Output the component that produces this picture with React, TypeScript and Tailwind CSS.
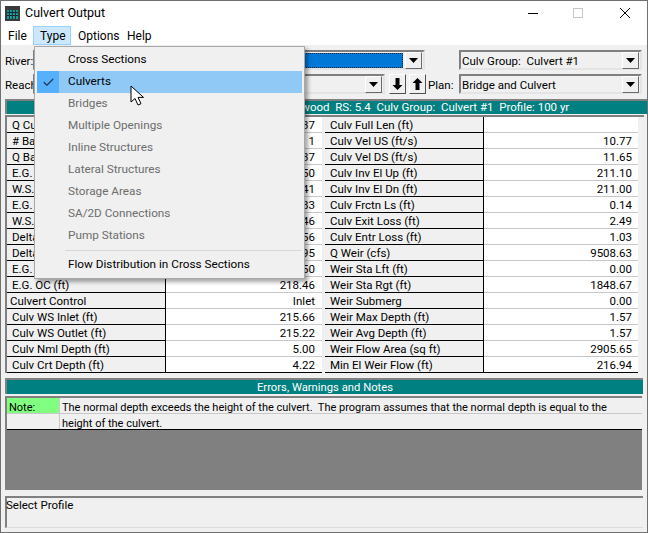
import { Check } from 'lucide-react';

const FONT = "font-['Roboto','Liberation_Sans',sans-serif]";

const leftRows = [
  ['Q Culv Group (cfs)', '37'],
  ['# Barrels', '1'],
  ['Q Barrel (cfs)', '37'],
  ['E.G. US. (ft)', '50'],
  ['W.S. US. (ft)', '41'],
  ['E.G. DS (ft)', '83'],
  ['W.S. DS (ft)', '46'],
  ['Delta EG (ft)', '56'],
  ['Delta WS (ft)', '95'],
  ['E.G. IC (ft)', '50'],
  ['E.G. OC (ft)', '218.46'],
  ['Culvert Control', 'Inlet'],
  ['Culv WS Inlet (ft)', '215.66'],
  ['Culv WS Outlet (ft)', '215.22'],
  ['Culv Nml Depth (ft)', '5.00'],
  ['Culv Crt Depth (ft)', '4.22'],
];

const rightRows = [
  ['Culv Full Len (ft)', ''],
  ['Culv Vel US (ft/s)', '10.77'],
  ['Culv Vel DS (ft/s)', '11.65'],
  ['Culv Inv El Up (ft)', '211.10'],
  ['Culv Inv El Dn (ft)', '211.00'],
  ['Culv Frctn Ls (ft)', '0.14'],
  ['Culv Exit Loss (ft)', '2.49'],
  ['Culv Entr Loss (ft)', '1.03'],
  ['Q Weir (cfs)', '9508.63'],
  ['Weir Sta Lft (ft)', '0.00'],
  ['Weir Sta Rgt (ft)', '1848.67'],
  ['Weir Submerg', '0.00'],
  ['Weir Max Depth (ft)', '1.57'],
  ['Weir Avg Depth (ft)', '1.57'],
  ['Weir Flow Area (sq ft)', '2905.65'],
  ['Min El Weir Flow (ft)', '216.94'],
];

const menuItems = [
  { label: 'Cross Sections', on: true },
  { label: 'Culverts', on: true, checked: true },
  { label: 'Bridges' },
  { label: 'Multiple Openings' },
  { label: 'Inline Structures' },
  { label: 'Lateral Structures' },
  { label: 'Storage Areas' },
  { label: 'SA/2D Connections' },
  { label: 'Pump Stations' },
];

const Arrow = () => (
  <button className="flex h-[17px] w-[17px] shrink-0 items-center justify-center border border-t-white border-l-white border-r-[#696969] border-b-[#696969] bg-[#f0f0f0]">
    <svg width="9" height="5" viewBox="0 0 9 5">
      <path d="M0 0h9L4.5 5z" fill="#000" />
    </svg>
  </button>
);

const Combo = ({ text, width, selected }: { text?: string; width: string; selected?: boolean }) => (
  <div className={`flex h-[20px] items-center justify-between border-2 border-t-[#808080] border-l-[#808080] border-r-[#e4e4e4] border-b-[#e4e4e4] bg-[#f0f0f0] pr-px ${width}`}>
    {selected ? (
      <div className="mr-[2px] h-[15px] flex-1 border border-dotted border-[#222] bg-[#0078d7]" />
    ) : (
      <span className="pt-[3px] pl-[1px] text-[11.5px] leading-none whitespace-pre">{text}</span>
    )}
    <Arrow />
  </div>
);

const ArrowButton = ({ d }: { d: string }) => (
  <button className="flex h-[20px] w-[17px] items-center justify-center border border-t-white border-l-white border-r-[#505050] border-b-[#505050] bg-[#f0f0f0]">
    <svg width="11" height="14" viewBox="0 0 11 14">
      <path d={d} fill="#000" />
    </svg>
  </button>
);

const DataTable = ({ rows, valueWidth, valuePad }: { rows: string[][]; valueWidth: string; valuePad: string }) => (
  <div className="flex flex-col">
    {rows.map(([label, value], i) => (
      <div key={label} className="flex h-[16px] text-[11.5px] leading-[17px]">
        <div className={`w-[159px] shrink-0 border-r border-b border-r-black border-b-black bg-[#f0f0f0] whitespace-nowrap ${label === 'Culvert Control' ? 'pl-[3px]' : 'pl-[5px]'}`}>
          {label}
        </div>
        <div className={`${valueWidth} ${valuePad} border-b bg-white text-right ${i === rows.length - 1 ? 'border-b-black' : 'border-b-[#c8c8c8]'}`}>
          {value}
        </div>
      </div>
    ))}
  </div>
);

const Menu = () => (
  <div className="absolute top-[45px] left-[33px] z-10 h-[233px] w-[271px] border border-[#a8a8a8] bg-[#f0f0f0] pt-[2px] text-[11.75px] shadow-[3px_3px_4px_rgba(0,0,0,0.35)]">
    {menuItems.map(item => (
      <div key={item.label} className={`mx-[2px] flex h-[22px] items-center ${item.checked ? 'bg-[#90c8f6]' : ''}`}>
        <div className={`flex h-[22px] w-[22px] items-center justify-center ${item.checked ? 'bg-[#56b0fa]' : ''}`}>
          {item.checked && <Check size={13} strokeWidth={2.2} color="#1f3a52" />}
        </div>
        <span className={`pl-[9px] ${item.on ? 'text-black' : 'text-[#6d6d6d]'}`}>{item.label}</span>
      </div>
    ))}
    <div className="mt-[3px] mr-[3px] ml-[30px] h-px bg-[#d7d7d7]" />
    <div className="mx-[2px] mt-[3px] flex h-[22px] items-center pl-[31px]">Flow Distribution in Cross Sections</div>
  </div>
);

const Cursor = () => (
  <svg className="absolute top-[84px] left-[129px] z-20" width="15" height="22" viewBox="0 0 15 22">
    <path d="M1 1v16l4-3.5 3 6.5 3-1.3-3-6.3h5.5z" fill="#fff" stroke="#000" strokeWidth="1" />
  </svg>
);

export default function App() {
  return (
    <div className={`relative flex h-[533px] w-[648px] flex-col overflow-hidden border border-[#707070] bg-[#f0f0f0] text-[#000] ${FONT}`}>
      {/* Title bar */}
      <div className="flex h-[25px] shrink-0 items-center bg-white pb-[1px] pl-[4px]">
        <svg width="15" height="15" viewBox="0 0 15 15" className="mr-[5px]">
          <rect width="15" height="15" fill="#3a3a3a" />
          <rect x="2" y="4" width="11" height="9" fill="#159a9a" />
          <path d="M4.5 4v9M7.5 4v9M10.5 4v9M2 6.5h11M2 9.5h11" stroke="#0d2f2f" strokeWidth="1" />
        </svg>
        <span className="text-[12.5px]">Culvert Output</span>
        <div className="ml-auto flex items-center">
          <svg width="12" height="12" viewBox="0 0 12 12" className="mr-[34px]">
            <path d="M1 6.5h10" stroke="#000" />
          </svg>
          <div className="mr-[36px] h-[10px] w-[10px] border border-[#c8c8c8]" />
          <svg width="12" height="12" viewBox="0 0 12 12" className="mr-[16px]">
            <path d="M1 1l10 10M11 1L1 11" stroke="#000" />
          </svg>
        </div>
      </div>

      {/* Menu bar */}
      <div className="flex h-[19px] shrink-0 items-center bg-white text-[12px]">
        <span className="w-[32px] pl-[7px]">File</span>
        <span className="flex h-[19px] w-[38px] items-center border border-[#99d1ff] bg-[#cce8ff] pl-[6px]">Type</span>
        <span className="w-[56px] pl-[7px]">Options</span>
        <span>Help</span>
      </div>

      {/* Selectors */}
      <div className="mt-[5px] flex h-[20px] shrink-0 items-center text-[11.5px]">
        <span className="w-[30px] pt-[3px] pl-[4px]">River:</span>
        <div className="ml-[2px]">
          <Combo width="w-[392px]" selected />
        </div>
        <div className="mr-[5px] ml-auto">
          <Combo width="w-[183px]" text="Culv Group:  Culvert #1" />
        </div>
      </div>
      <div className="mt-[4px] flex h-[20px] shrink-0 items-center text-[11.5px]">
        <span className="w-[30px] pt-[3px] pl-[4px]">Reach:</span>
        <div className="ml-[2px]">
          <Combo width="w-[352px]" text="Kentwood" />
        </div>
        <div className="ml-[4px] flex gap-[3px]">
          <ArrowButton d="M3.5 1h4v7h3L5.5 13 .5 8h3z" />
          <ArrowButton d="M5.5 1l5 5h-3v7h-4V6h-3z" />
        </div>
        <span className="ml-[2px] pt-[3px]">Plan:</span>
        <div className="mr-[5px] ml-auto">
          <Combo width="w-[183px]" text="Bridge and Culvert" />
        </div>
      </div>

      {/* Culvert output */}
      <div className="mt-[5px] ml-[4px] flex h-[15px] shrink-0 items-center justify-center border-t-2 border-l-2 border-t-[#808080] border-l-[#808080] bg-[#008080] pl-[52px] text-[11.5px] leading-none whitespace-pre text-white">
        River: Beaver Creek  Reach: Kentwood  RS: 5.4  Culv Group:  Culvert #1  Profile: 100 yr
      </div>
      <div className="mt-[1px] mr-[3px] ml-[4px] flex shrink-0 gap-[3px] border-t-2 border-l-2 border-t-[#808080] border-l-[#808080] bg-[#f0f0f0] pr-[8px]">
        <DataTable rows={leftRows} valueWidth="w-[156px]" valuePad="pr-[7px]" />
        <DataTable rows={rightRows} valueWidth="w-[154px]" valuePad="pr-[6px]" />
      </div>

      {/* Errors, warnings and notes */}
      <div className="mt-[5px] mr-[4px] ml-[4px] flex h-[16px] shrink-0 items-center justify-center border-t-2 border-l-2 border-t-[#808080] border-l-[#808080] bg-[#008080] pt-[2px] text-[11.25px] leading-none text-white">
        Errors, Warnings and Notes
      </div>
      <div className="mt-[2px] mr-[5px] ml-[4px] flex h-[94px] shrink-0 flex-col border-t-2 border-l-2 border-t-[#808080] border-l-[#808080] bg-[#808080] text-[11px] leading-[19px]">
        <div className="flex h-[16px] border-b border-b-[#c8c8c8] bg-[#f0f0f0]">
          <div className="w-[53px] shrink-0 border-r border-r-[#c8c8c8] bg-[#80ff80] pl-[2px]">Note:</div>
          <div className="pl-[2px] whitespace-pre">The normal depth exceeds the height of the culvert.  The program assumes that the normal depth is equal to the</div>
        </div>
        <div className="flex h-[16px] border-b border-b-black bg-[#f0f0f0]">
          <div className="w-[53px] shrink-0 border-r border-r-[#c8c8c8]" />
          <div className="pl-[2px]">height of the culvert.</div>
        </div>
      </div>

      {/* Status */}
      <div className="mt-[6px] mr-[4px] ml-[4px] h-[32px] shrink-0 border-t-2 border-b border-l-2 border-t-[#808080] border-b-[#dcdcdc] border-l-[#808080] text-[11.5px] leading-[14px]">
        <span className="-ml-[1px] block">Select Profile</span>
      </div>

      <Menu />
      <Cursor />
    </div>
  );
}
